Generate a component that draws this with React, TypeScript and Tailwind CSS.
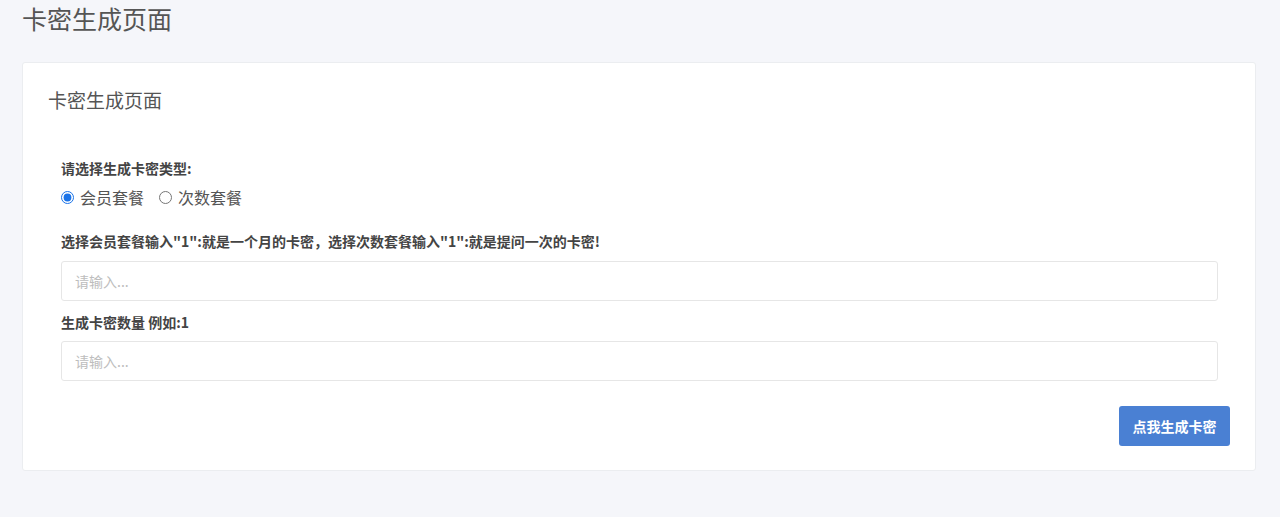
import React, { useState } from "react";

export default function App() {
  const [type, setType] = useState("member");
  const font = { fontFamily: '"Noto Sans CJK SC", "Noto Sans", sans-serif' };
  return (
    <div className="min-h-[517px] w-full bg-[#f5f6fa] pl-[22px] pr-[24px] pb-[46px]" style={font}>
      <div className="flex h-[62px] items-start">
        <h1 className="mt-[1px] text-[25px] leading-[34px] font-normal text-[#555]">卡密生成页面</h1>
      </div>
      <div className="rounded-[3px] border border-[#ebedf0] bg-white px-[25px] pt-[23px] pb-[24px]">
        <div className="text-[19px] leading-[28px] text-[#555]">卡密生成页面</div>
        <div className="mt-[44px] pl-[13px] pr-[12px]">
          <div className="text-[14px] leading-[20px] font-bold text-[#444]">请选择生成卡密类型:</div>
          <div className="mt-[9px] flex items-center gap-[15px] text-[16px] leading-[20px] text-[#555]">
            <label className="flex items-center gap-[6px]">
              <input
                type="radio"
                name="t"
                checked={type === "member"}
                onChange={() => setType("member")}
                className="m-0 h-[13px] w-[13px] accent-[#1a73e8]"
              />
              会员套餐
            </label>
            <label className="flex items-center gap-[6px]">
              <input
                type="radio"
                name="t"
                checked={type === "count"}
                onChange={() => setType("count")}
                className="m-0 h-[13px] w-[13px] accent-[#1a73e8]"
              />
              次数套餐
            </label>
          </div>
          <div className="mt-[24px] text-[14px] leading-[20px] font-bold text-[#444]">
            选择会员套餐输入"1":就是一个月的卡密，选择次数套餐输入"1":就是提问一次的卡密!
          </div>
          <input
            placeholder="请输入..."
            className="mt-[10px] h-[40px] w-full rounded-[3px] border border-[#e6e6e6] px-[13px] text-[14px] text-[#555] outline-none placeholder:text-[#bdbdbd]"
          />
          <div className="mt-[11px] text-[14px] leading-[20px] font-bold text-[#444]">生成卡密数量 例如:1</div>
          <input
            placeholder="请输入..."
            className="mt-[9px] h-[40px] w-full rounded-[3px] border border-[#e6e6e6] px-[13px] text-[14px] text-[#555] outline-none placeholder:text-[#bdbdbd]"
          />
        </div>
        <div className="mt-[25px] flex justify-end">
          <button className="h-[40px] w-[111px] rounded-[3px] bg-[#4a80d3] text-[14px] font-bold text-white">
            点我生成卡密
          </button>
        </div>
      </div>
    </div>
  );
}
